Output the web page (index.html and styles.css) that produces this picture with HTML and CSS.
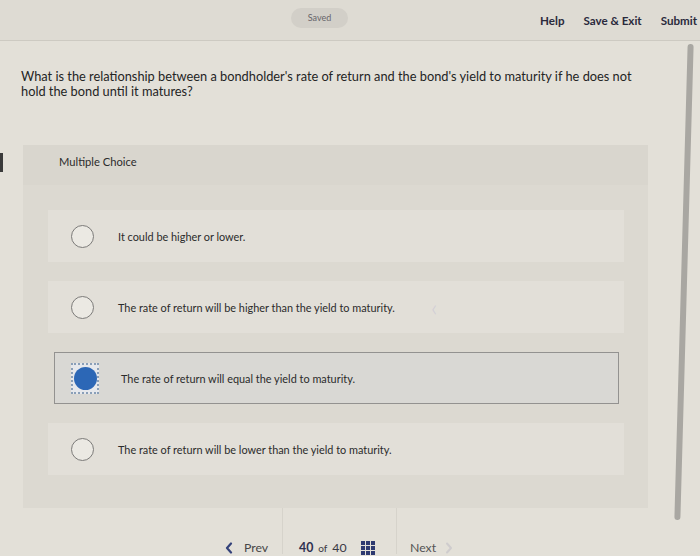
FILE: index.html
```html
<!DOCTYPE html>
<html>
<head>
<meta charset="utf-8">
<link rel="stylesheet" href="styles.css">
</head>
<body>
<div class="page">
  <header class="topbar">
    <div class="saved">Saved</div>
    <nav class="actions">
      <span class="act">Help</span>
      <span class="act">Save &amp; Exit</span>
      <span class="act">Submit</span>
    </nav>
  </header>

  <main class="content">
    <p class="question">What is the relationship between a bondholder's rate of return and the bond's yield to maturity if he does not hold the bond until it matures?</p>

    <section class="panel">
      <div class="panel-head">Multiple Choice</div>
      <div class="options">
        <div class="option"><span class="radio"></span><span class="opt-text">It could be higher or lower.</span></div>
        <div class="option"><span class="radio"></span><span class="opt-text">The rate of return will be higher than the yield to maturity.</span><span class="caret">&lsaquo;</span></div>
        <div class="option selected"><span class="focus"><span class="radio on"></span></span><span class="opt-text">The rate of return will equal the yield to maturity.</span></div>
        <div class="option"><span class="radio"></span><span class="opt-text">The rate of return will be lower than the yield to maturity.</span></div>
      </div>
    </section>

    <footer class="pager">
      <div class="pg prev">
        <svg class="chev-l" width="8" height="12" viewBox="0 0 8 12"><path d="M6 1.5 L2 6 L6 10.5" fill="none" stroke="#34427a" stroke-width="2.2" stroke-linecap="round" stroke-linejoin="round"/></svg>Prev</div>
      <div class="pg count"><b>40</b><span class="of">of</span>40
        <svg class="grid" width="14" height="14" viewBox="0 0 14 14">
          <rect x="0" y="0" width="4" height="4"/><rect x="5" y="0" width="4" height="4"/><rect x="10" y="0" width="4" height="4"/>
          <rect x="0" y="5" width="4" height="4"/><rect x="5" y="5" width="4" height="4"/><rect x="10" y="5" width="4" height="4"/>
          <rect x="0" y="10" width="4" height="4"/><rect x="5" y="10" width="4" height="4"/><rect x="10" y="10" width="4" height="4"/>
        </svg>
      </div>
      <div class="pg next">Next<svg class="chev-r" width="8" height="12" viewBox="0 0 8 12"><path d="M2 1.5 L6 6 L2 10.5" fill="none" stroke="#cfcccd" stroke-width="2" stroke-linecap="round" stroke-linejoin="round"/></svg></div>
    </footer>
  </main>

  <div class="edge-mark"></div>
  <div class="scrollbar"></div>
</div>
</body>
</html>
```

FILE: styles.css
```css
html, body {
  margin: 0;
  padding: 0;
}
body {
  width: 700px;
  height: 556px;
  overflow: hidden;
  background: #e3e0d8;
  font-family: Lato, "Open Sans", Arial, sans-serif;
  color: #2a2a2a;
}
.page {
  position: relative;
  width: 700px;
  height: 556px;
  display: flex;
  flex-direction: column;
}
.topbar {
  height: 41px;
  flex: none;
  background: #dedbd3;
  border-bottom: 1px solid #cdcac2;
  display: flex;
  align-items: flex-start;
  padding-left: 291px;
  box-sizing: border-box;
}
.saved {
  margin-top: 8px;
  width: 57px;
  height: 20px;
  border-radius: 10px;
  background: #d2cfc8;
  color: #67656a;
  font-size: 9px;
  line-height: 20px;
  text-align: center;
}
.actions {
  margin-left: auto;
  display: flex;
  gap: 19px;
  padding-top: 14px;
  padding-right: 3px;
}
.act {
  font-size: 11.6px;
  font-weight: 700;
  color: #2a2a3c;
}
.content {
  flex: 1;
  display: flex;
  flex-direction: column;
}
.question {
  margin: 28px 0 0 21px;
  width: 622px;
  font-size: 12.8px;
  line-height: 15px;
  color: #242424;
}
.panel {
  margin: 46px 0 0 23px;
  width: 625px;
  height: 363px;
  background: #dcd9d1;
  flex: none;
}
.panel-head {
  height: 40px;
  box-sizing: border-box;
  padding: 10px 0 0 36px;
  font-size: 11.2px;
  color: #2c2c2c;
  background: #d9d6ce;
}
.options {
  display: flex;
  flex-direction: column;
  gap: 19px;
  padding: 25px 0 0 25px;
}
.option {
  width: 576px;
  height: 52px;
  box-sizing: border-box;
  background: #e2dfd8;
  display: flex;
  align-items: center;
  padding-left: 23px;
  position: relative;
}
.option.selected {
  margin-left: 6px;
  width: 565px;
  background: #d9d8d4;
  border: 1px solid #939290;
  padding-left: 16px;
}
.radio {
  width: 23px;
  height: 23px;
  box-sizing: border-box;
  border: 1.5px solid #7c7b79;
  border-radius: 50%;
  background: #ebe9e3;
  flex: none;
}
.radio.on {
  border: none;
  background: #2c67b6;
}
.focus {
  width: 28px;
  height: 31px;
  box-sizing: border-box;
  border: 2px dotted #8a9fb8;
  display: flex;
  align-items: center;
  justify-content: center;
  flex: none;
  background: #e6e8ec;
}
.opt-text {
  margin-left: 24px;
  font-size: 10.9px;
  color: #2b2b2b;
}
.selected .opt-text {
  margin-left: 22px;
}
.caret {
  position: absolute;
  left: 383px;
  top: 11px;
  font-size: 24px;
  color: #cfccd6;
  font-weight: 300;
}
.pager {
  display: flex;
  align-items: flex-end;
  height: 46px;
  padding-left: 225px;
  font-size: 12.3px;
  color: #474747;
}
.pg {
  display: flex;
  align-items: center;
  height: 46px;
  box-sizing: border-box;
  padding-top: 33px;
}
.prev {
  width: 58px;
  border-right: 1px solid #d6d3cb;
}
.chev-l {
  margin-right: 11px;
}
.count {
  width: 114px;
  padding-left: 16px;
  border-right: 1px solid #d6d3cb;
  color: #3a3a44;
}
.count b {
  font-weight: 700;
  color: #2e3050;
}
.of {
  font-size: 10px;
  margin: 0 5px;
}
.grid {
  margin-left: 14px;
  fill: #2e3a70;
}
.next {
  padding-left: 13px;
  color: #555;
}
.chev-r {
  margin-left: 9px;
}
.edge-mark {
  position: absolute;
  left: 0;
  top: 153px;
  width: 3px;
  height: 19px;
  background: #3a3a3a;
}
.scrollbar {
  position: absolute;
  left: 681px;
  top: 44px;
  width: 6px;
  height: 476px;
  border-radius: 3px;
  background: #a9a7a2;
  transform: rotate(1.6deg);
}
```
